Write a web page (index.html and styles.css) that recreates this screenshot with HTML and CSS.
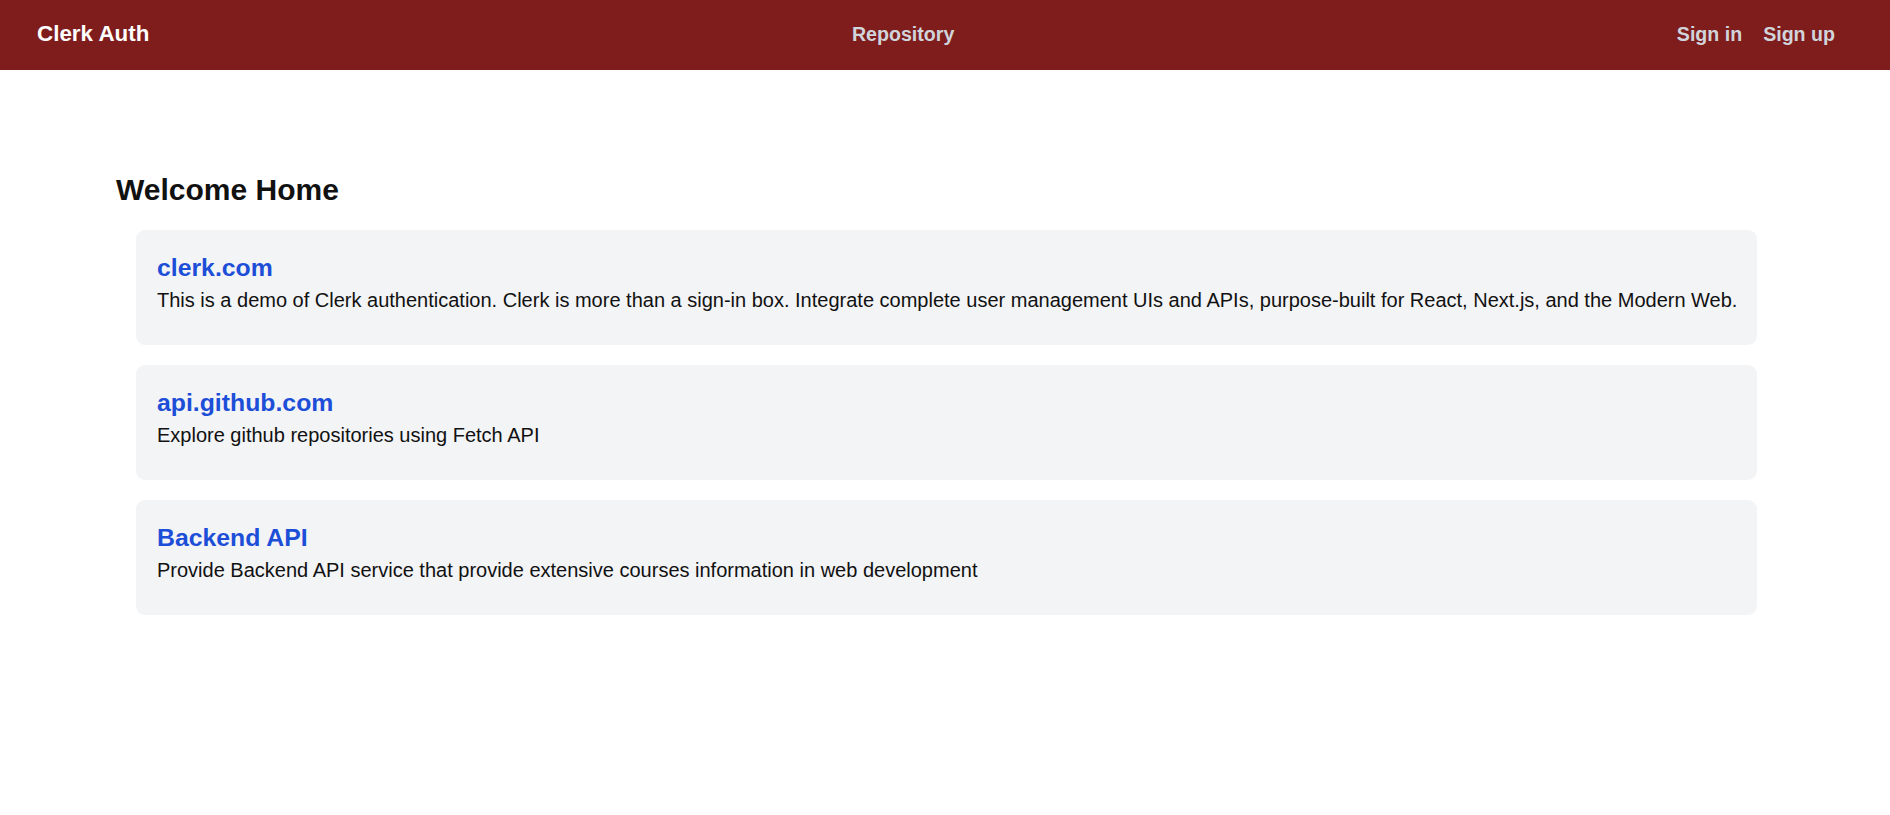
FILE: index.html
```html
<!DOCTYPE html>
<html lang="en">
<head>
<meta charset="utf-8">
<title>Clerk Auth</title>
<link rel="stylesheet" href="styles.css">
</head>
<body>
<header class="topbar">
  <a class="brand" href="#">Clerk Auth</a>
  <nav class="center-nav"><a href="#">Repository</a></nav>
  <nav class="auth-nav">
    <a href="#">Sign in</a>
    <a href="#">Sign up</a>
  </nav>
</header>
<main class="main">
  <h1 class="page-title">Welcome Home</h1>
  <section class="card">
    <h2 class="card-title"><a href="#">clerk.com</a></h2>
    <p class="card-text">This is a demo of Clerk authentication. Clerk is more than a sign-in box. Integrate complete user management UIs and APIs, purpose-built for React, Next.js, and the Modern Web.</p>
  </section>
  <section class="card">
    <h2 class="card-title"><a href="#">api.github.com</a></h2>
    <p class="card-text">Explore github repositories using Fetch API</p>
  </section>
  <section class="card">
    <h2 class="card-title"><a href="#">Backend API</a></h2>
    <p class="card-text">Provide Backend API service that provide extensive courses information in web development</p>
  </section>
</main>
</body>
</html>
```
FILE: styles.css
```css
* { box-sizing: border-box; }
html, body { margin: 0; padding: 0; }
body {
  font-family: "Liberation Sans", Arial, sans-serif;
  background: #ffffff;
  color: #111111;
}
a { text-decoration: none; }

.topbar {
  height: 70px;
  background: #7f1d1d;
  display: flex;
  align-items: center;
  justify-content: space-between;
  padding: 0 54px 0 37px;
}
.brand {
  color: #ffffff;
  font-weight: 700;
  font-size: 22.4px;
  line-height: 28px;
  margin-top: -3px;
}
.center-nav a,
.auth-nav a {
  color: #d1d5db;
  font-weight: 700;
  font-size: 19.6px;
  line-height: 28px;
}
.center-nav { margin-top: -3px; margin-left: -20px; }
.auth-nav {
  display: flex;
  gap: 21px;
  margin-top: -3px;
  margin-right: 1px;
}

.main {
  padding: 102px 113px 40px 116px;
}
.page-title {
  margin: 0 0 22px 0;
  font-size: 30px;
  line-height: 36px;
  font-weight: 700;
  color: #111111;
}
.card {
  margin: 0 20px 20px 20px;
  background: #f3f4f6;
  border-radius: 9px;
  padding: 22px 6px 31px 21px;
}
.card-title {
  margin: 0;
  font-size: 24.8px;
  line-height: 32px;
  font-weight: 700;
}
.card-title a { color: #1d4ed8; }
.card-text {
  margin: 2px 0 0 0;
  font-size: 20px;
  line-height: 28px;
  color: #111111;
}
```
